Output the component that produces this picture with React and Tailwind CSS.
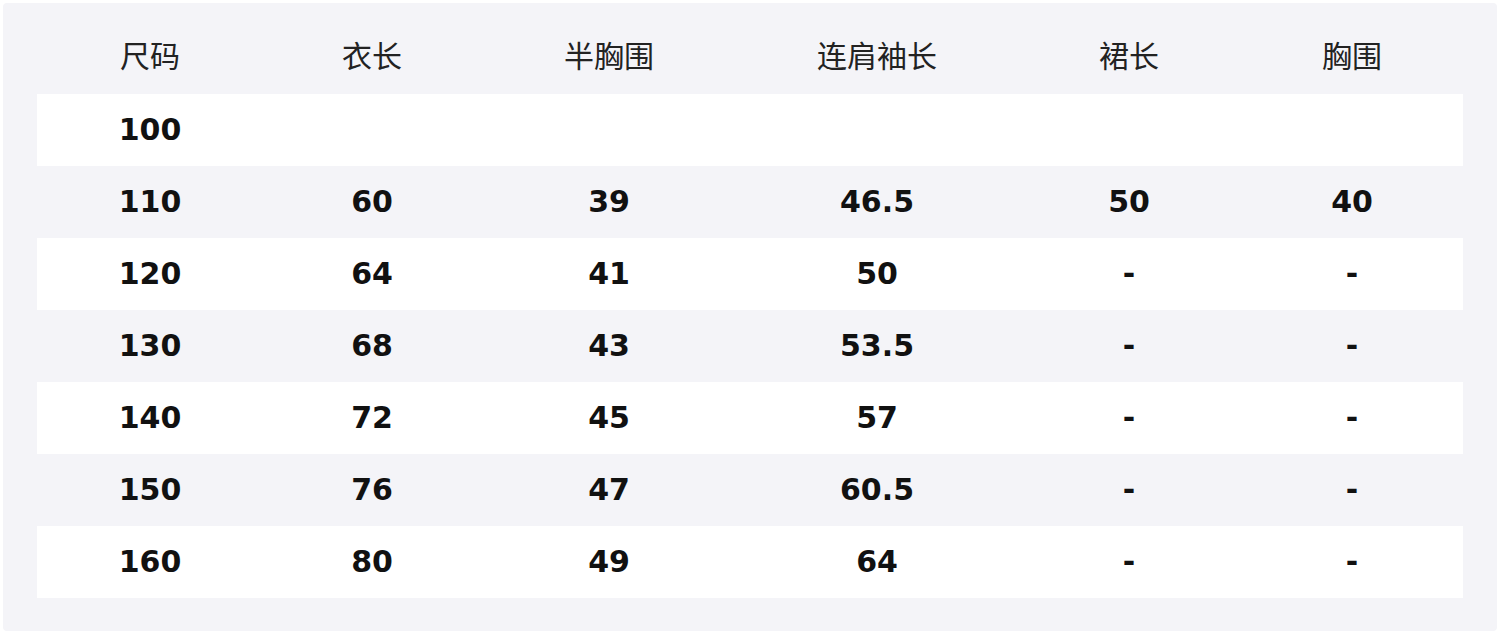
const headers = ["尺码", "衣长", "半胸围", "连肩袖长", "裙长", "胸围"];

const rows = [
	["100", "", "", "", "", ""],
	["110", "60", "39", "46.5", "50", "40"],
	["120", "64", "41", "50", "-", "-"],
	["130", "68", "43", "53.5", "-", "-"],
	["140", "72", "45", "57", "-", "-"],
	["150", "76", "47", "60.5", "-", "-"],
	["160", "80", "49", "64", "-", "-"],
];

const cols = "grid grid-cols-[226px_218px_256px_280px_224px_222px]";

export default function App() {
	return (
		<div className="w-[1500px] h-[635px] bg-white p-[3px] font-['DejaVu_Sans','Noto_Sans_CJK_SC',sans-serif]">
			<div className="h-[628px] bg-[#f4f4f8] rounded-sm px-[34px] pt-[19px]">
				{/* Header */}
				<div className={`${cols} h-[72px] pb-[8px] items-center text-[30px] text-[#222] font-['Noto_Sans_CJK_SC',sans-serif]`}>
					{headers.map((h) => (
						<div key={h} className="text-center leading-none">
							{h}
						</div>
					))}
				</div>

				{rows.map((row, i) => (
					<div
						key={row[0]}
						className={`${cols} h-[72px] items-center text-[30px] font-bold text-[#111] ${
							i % 2 === 0 ? "bg-white" : ""
						}`}
					>
						{row.map((cell, j) => (
							<div key={j} className="text-center leading-none">
								{cell}
							</div>
						))}
					</div>
				))}
			</div>
		</div>
	);
}
